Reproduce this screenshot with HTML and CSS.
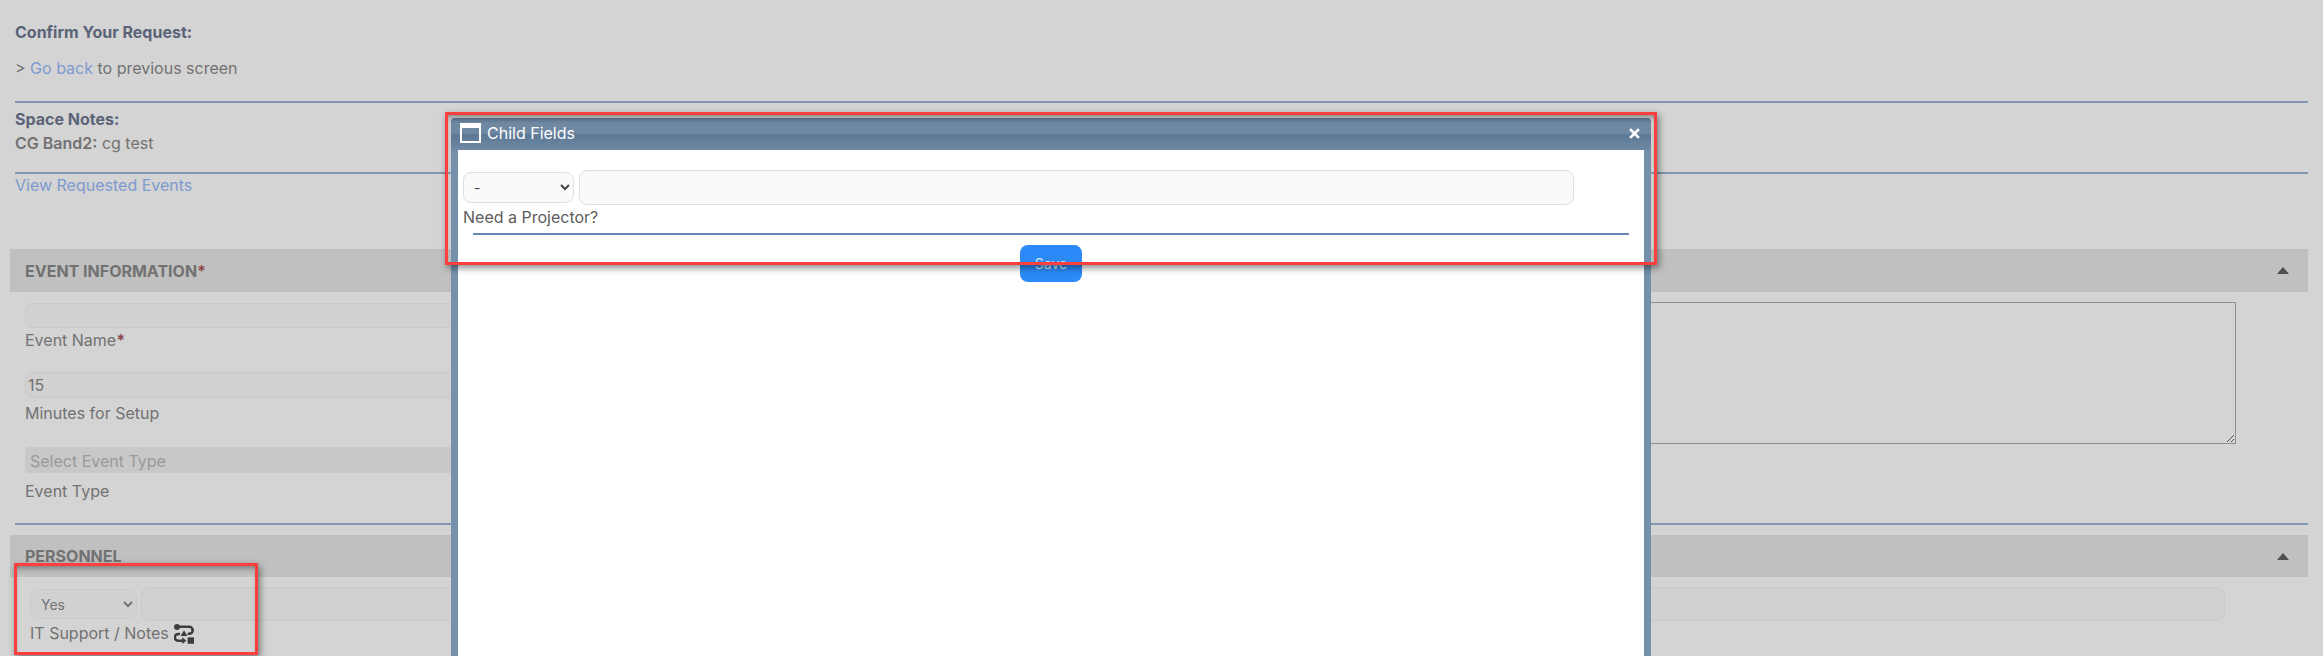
FILE: index.html
```html
<!DOCTYPE html>
<html lang="en">
<head>
<meta charset="utf-8">
<title>Confirm Your Request</title>
<link rel="stylesheet" href="styles.css">
</head>
<body>
<main class="page">
  <section class="intro">
    <p class="heading">Confirm Your Request:</p>
    <p class="back">&gt; <a href="#">Go back</a> to previous screen</p>
    <hr class="rule rule-first">
    <p class="heading">Space Notes:</p>
    <p class="note"><b>CG Band2:</b> cg test</p>
    <hr class="rule rule-second">
    <p><a href="#">View Requested Events</a></p>
  </section>

  <header class="panel-head panel-head-event">
    <span>EVENT INFORMATION<em class="req">*</em></span>
    <svg class="caret" viewBox="0 0 12 7"><path d="M6 0 12 7H0z"/></svg>
  </header>
  <section class="event-grid">
    <div class="fields">
      <div class="field field-name">
        <input class="text-input input-name" type="text">
        <label>Event Name<em class="req">*</em></label>
      </div>
      <div class="field field-setup">
        <input class="text-input input-setup" type="text" value="15">
        <label class="label-setup">Minutes for Setup</label>
      </div>
      <div class="field">
        <div class="fake-select">Select Event Type</div>
        <label class="label-type">Event Type</label>
      </div>
    </div>
    <textarea class="notes"></textarea>
  </section>
  <hr class="rule rule-third">

  <header class="panel-head panel-head-personnel">
    <span>PERSONNEL</span>
    <svg class="caret" viewBox="0 0 12 7"><path d="M6 0 12 7H0z"/></svg>
  </header>
  <section class="personnel">
    <div class="row">
      <select class="pick pick-yes"><option>Yes</option></select>
      <input class="text-input input-it" type="text">
    </div>
    <div class="it-label">
      <span>IT Support / Notes</span>
      <svg class="flow-icon" viewBox="0 0 20 20">
        <circle cx="3" cy="3" r="3"/>
        <path class="flow-line" d="M5 2.8h10.2a3.4 3.4 0 0 1 0 7H13.6"/>
        <path d="M10 6.2 13.4 12H6.6z"/>
        <path class="flow-line" d="M6 10H4.2a3.3 3.3 0 0 0 0 6.8H9"/>
        <path d="M8.2 13.2 12.4 16.8 8.2 20z"/>
        <rect x="13.6" y="13.4" width="6.4" height="6.4"/>
      </svg>
    </div>
  </section>
</main>

<div class="overlay"></div>

<aside class="modal">
  <div class="modal-bar">
    <span class="window-icon"></span>
    <span class="modal-title">Child Fields</span>
    <svg class="close" viewBox="0 0 10 10"><path d="M1 1 9 9M9 1 1 9"/></svg>
  </div>
  <div class="modal-body">
    <div class="row modal-row">
      <select class="pick pick-dash"><option>-</option></select>
      <input class="text-input input-child" type="text">
    </div>
    <label class="modal-label">Need a Projector?</label>
    <hr class="modal-rule">
    <div class="modal-actions"><button class="save" type="button">Save</button></div>
  </div>
</aside>

<div class="callout callout-modal"></div>
<div class="callout callout-field"></div>
</body>
</html>
```
FILE: styles.css
```css
* { box-sizing: border-box; }
html, body { margin: 0; height: 656px; overflow: hidden; }
body { position: relative; background: #fff; color: #8a8a8a; font: 16px/24px "Inter", "Liberation Sans", sans-serif; }
p { margin: 0; }
a { color: #99bafa; text-decoration: none; }
em { font-style: normal; }
.page { height: 656px; overflow: hidden; }

.intro { padding: 20px 15px 0; height: 249px; }
.heading { color: #6e7891; font-weight: 700; }
.back { margin-top: 12px; }
.note b { font-weight: 600; }
.rule { height: 2px; border: 0; margin: 0; background: #9db6d0; }
.rule-first { margin: 21px 0 4px; }
.rule-second { margin: 17px 0 -1px; }
.rule-third { margin: 9px 15px 10px; }

.panel-head { display: flex; justify-content: space-between; align-items: center; margin: 0 15px 0 10px; padding: 0 19px 0 15px; background: #e7e7e7; font-weight: 700; color: #8a8a8a; }
.panel-head-event { height: 43px; }
.panel-head-personnel { height: 42px; }
.req { color: #a95959; font-weight: 700; }
.caret { width: 12px; height: 7px; fill: #5f5f5f; }

.event-grid { display: grid; grid-template-columns: 1075px 1076px; column-gap: 60px; padding: 10px 0 0 25px; height: 222px; align-items: start; }
.fields { display: flex; flex-direction: column; padding-top: 1px; }
.field { display: flex; flex-direction: column; }
.field-name { margin-bottom: 20px; }
.field-setup { margin-bottom: 22px; }
.label-setup { margin-top: 3px; }
.label-type { margin-top: 6px; }
.text-input { border: 1px solid #f2f2f2; border-radius: 8px; background: #fcfcfc; color: #8a8a8a; font: 16px "Inter", sans-serif; padding: 0 2px; outline: none; }
.input-name { height: 25px; }
.input-setup { height: 26px; }
.fake-select { height: 26px; padding-left: 5px; border-radius: 4px; background: #f1f1f1; color: #b9b9b9; line-height: 29px; }
.notes { width: 1076px; height: 142px; margin: 0; background: #fff; border: 1px solid #adadad; }

.personnel { padding: 10px 0 0 30px; }
.row { display: flex; align-items: center; gap: 4px; }
.pick { height: 30px; border: 1px solid #f2f2f2; border-radius: 8px; background-color: #fcfcfc; color: #8a8a8a; font: 14px "Inter", sans-serif; padding-left: 6px; }
.pick-yes { width: 107px; }
.input-it { width: 2084px; height: 34px; }
.it-label { display: flex; align-items: center; gap: 5px; height: 24px; }
.flow-icon { width: 20px; height: 20px; margin-top: 1px; fill: #4a4a4a; }
.flow-line { fill: none; stroke: #4a4a4a; stroke-width: 2.6; }

.overlay { position: fixed; inset: 0; background: rgba(0, 0, 0, 0.17); }

.modal { position: absolute; left: 451px; top: 118px; width: 1200px; height: 560px; background: #7490ab; border-radius: 4px 4px 0 0; }
.modal-bar { display: flex; align-items: center; height: 32px; padding: 0 11px 0 9px; color: #fff; background: linear-gradient(#5e7b96 0%, #7089a3 16%, #6f88a2 48%, #5b7894 52%, #7089a4 100%); border-radius: 4px 4px 0 0; }
.window-icon { width: 21px; height: 20px; border: 2px solid #fff; border-top-width: 5px; margin-bottom: 2px; }
.modal-title { margin: 0 0 2px 6px; }
.close { width: 11px; height: 11px; margin: 0 0 2px auto; fill: none; stroke: #fff; stroke-width: 2.4; }
.modal-body { margin: 0 7px; height: 528px; background: #fff; padding-top: 20px; }
.modal-row { padding-left: 5px; gap: 5px; }
.pick-dash { width: 111px; height: 31px; color: #444; border-color: #e0e0e0; background-color: #fafafa; }
.input-child { width: 995px; height: 35px; border-color: #e0e0e0; background: #fafafa; }
.modal-label { display: block; padding-left: 5px; color: #5c5c5c; }
.modal-rule { height: 2px; border: 0; margin: 4px 15px 10px; background: #6589b0; }
.modal-actions { display: flex; justify-content: center; }
.save { width: 62px; height: 37px; border: 0; border-radius: 8px; background: #2b8af7; color: #dbe4ee; font: 14px "Inter", sans-serif; padding: 0; }

.callout { position: absolute; border: 3px solid #f9403f; box-shadow: 2px 3px 7px rgba(0, 0, 0, 0.45), inset 0 5px 6px -3px rgba(0, 0, 0, 0.4); }
.callout-modal { left: 445px; top: 112px; width: 1212px; height: 153px; }
.callout-field { left: 14px; top: 563px; width: 244px; height: 92px; }
```
